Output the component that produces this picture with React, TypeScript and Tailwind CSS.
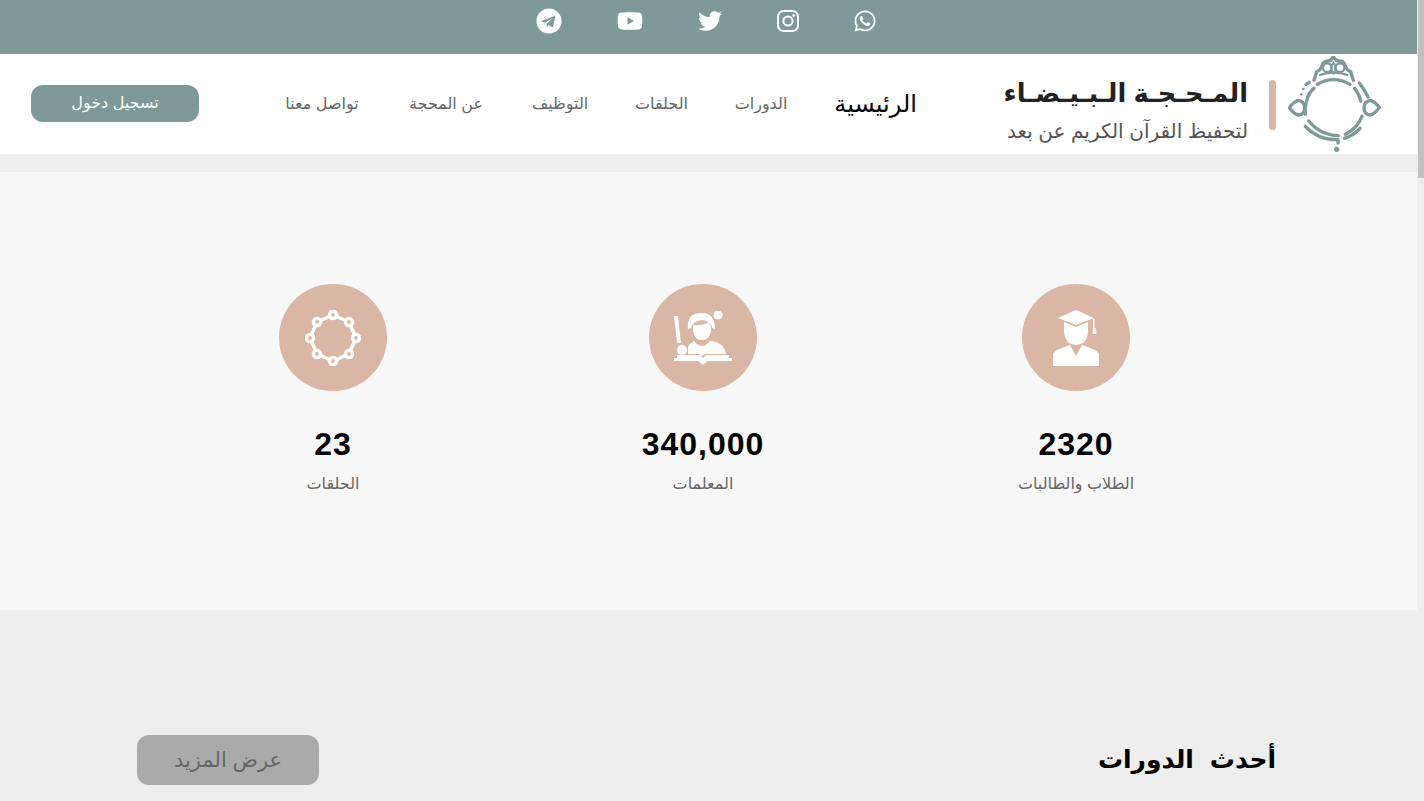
import React from "react";
import { FaWhatsapp, FaTwitter, FaYoutube, FaTelegram } from "react-icons/fa";

const NAV_ITEMS = [
  { label: "الدورات", width: "w-[52px]" },
  { label: "الحلقات", width: "w-[47px]" },
  { label: "التوظيف", width: "w-[56px]" },
  { label: "عن المحجة", width: "w-[72px]" },
  { label: "تواصل معنا", width: "w-[76px]" },
];

// viewBox is in px*3 from the logo crop, easier to trace that way
const Logo = () => (
  <svg width="93" height="97" viewBox="54 15 279 291" fill="none" stroke="#7f9999" strokeWidth="10" strokeLinecap="round" strokeLinejoin="round">
    {/* crown */}
    <path d="M132 88 L140 62 Q152 58 156 44 Q160 30 176 30 Q184 30 190 16 Q196 30 206 30 Q222 30 226 44 Q230 58 242 62 L250 88" />
    <circle cx="172" cy="50" r="13" strokeWidth="7" />
    <circle cx="210" cy="50" r="13" strokeWidth="7" />
    <path d="M190 34 Q178 52 190 68 Q202 52 190 34" strokeWidth="6" />
    <path d="M150 72 Q190 58 232 72" strokeWidth="7" />
    <path d="M142 100 Q190 72 240 100" />
    {/* ring */}
    <path d="M110 150 Q116 124 132 112" />
    <path d="M106 190 Q104 172 108 158" />
    <path d="M268 96 Q284 116 294 138" />
    <path d="M254 112 Q268 130 272 150" />
    <path d="M276 196 Q262 232 226 250" />
    <path d="M116 210 Q150 252 205 254" />
    <path d="M106 226 Q146 268 204 266 L204 276" />
    <path d="M224 262 Q252 252 270 232" />
    {/* side knots */}
    <path d="M58 170 Q72 150 86 148 Q104 152 104 170 Q104 190 86 192 Q72 190 58 170 Z" />
    <circle cx="86" cy="170" r="12" fill="white" stroke="none" />
    <path d="M328 170 Q314 150 300 148 Q282 152 282 170 Q282 190 300 192 Q314 190 328 170 Z" />
    <circle cx="300" cy="170" r="12" fill="white" stroke="none" />
    {/* dots */}
    <path d="M108 100 L118 94" />
    <circle cx="100" cy="114" r="4" fill="#7f9999" stroke="none" />
    <circle cx="94" cy="130" r="4" fill="#7f9999" stroke="none" />
    <circle cx="200" cy="295" r="8" fill="#7f9999" stroke="none" />
  </svg>
);

const InstagramIcon = () => (
  <svg width="22" height="22" viewBox="0 0 22 22" fill="none" stroke="white" strokeWidth="2" className="mt-[2px] ml-[55px]">
    <rect x="1" y="1" width="20" height="20" rx="5.5" />
    <circle cx="11" cy="11" r="4.6" />
    <circle cx="16.6" cy="5.4" r="1.3" fill="white" stroke="none" />
  </svg>
);

const GraduateIcon = () => (
  <svg width="46" height="56" viewBox="0 0 46 56" fill="white">
    <path d="M23 0 L41 8 L23 15 L5 8 Z" />
    <path d="M40 9 H41.5 V18 H43 L43.5 24 H39.5 L40 18 H40 Z" />
    <path d="M11 12 L23 17 L35 12 V20 Q35 34 23 35 Q11 34 11 20 Z" />
    <path d="M0 56 V44 Q1 40 17 35 L23 46 L29 35 Q45 40 46 44 V56 Z" />
  </svg>
);

const TeacherIcon = () => (
  <svg width="58" height="54" viewBox="0 0 58 54" fill="white">
    <path d="M0 5 H4 L7 32 H3 Z" />
    <circle cx="8" cy="39" r="5" />
    <circle cx="44" cy="4" r="4.5" />
    <path d="M14 18 Q12 2 28 2 Q41 2 41 18 L38 17 Q37 10 28 9 Q19 10 17 17 Z" />
    <path d="M19 14 Q28 15 35 11 Q37 14 37 19 Q36 29 28 29 Q20 29 19 19 Z" />
    <path d="M20 30 Q28 40 36 30 Q50 31 52 43 H31 L28 45 L25 43 H14 V36 Q16 32 20 30 Z" />
    <path d="M0 50 V47 H3 V44 H26 L29 47 L32 44 H55 V47 H58 V50 H34 L29 54 L24 50 Z" />
  </svg>
);

const RingIcon = () => (
  <svg width="56" height="56" viewBox="0 0 56 56" fill="none" stroke="white" strokeWidth="3.5">
    <path d="M28 5 L44 12 L51 28 L44 44 L28 51 L12 44 L5 28 L12 12 Z" strokeLinejoin="round" />
    {[
      [28, 5],
      [44, 12],
      [51, 28],
      [44, 44],
      [28, 51],
      [12, 44],
      [5, 28],
      [12, 12],
    ].map(([cx, cy]) => (
      <circle key={`${cx}-${cy}`} cx={cx} cy={cy} r="3.6" fill="#dab7a5" strokeWidth="3.4" />
    ))}
  </svg>
);

const Stat = ({ icon, value, label }: { icon: React.ReactNode; value: string; label: string }) => (
  <div className="flex flex-col items-center">
    <div className="flex h-[107px] w-[108px] items-center justify-center rounded-full bg-[#dab7a5]">{icon}</div>
    <div dir="ltr" className="mt-[33px] text-[32px] leading-[40px] font-bold tracking-[1px] text-black">
      {value}
    </div>
    <div className="mt-[10px] text-base leading-5 text-[#666666]">{label}</div>
  </div>
);

export default function App() {
  return (
    <div className="flex h-[801px] overflow-hidden bg-[#eeeeee] font-['Liberation_Sans','DejaVu_Sans',sans-serif]" dir="ltr">
      <div className="min-w-0 flex-1" dir="rtl">
        {/* social bar */}
        <div className="flex h-[54px] items-start bg-[#7f9999] pt-2 pl-[536px] text-white" dir="ltr">
          <FaTelegram size={26} />
          <FaYoutube size={26} className="ml-[55px]" />
          <FaTwitter size={24} className="mt-px ml-[55px]" />
          <InstagramIcon />
          <FaWhatsapp size={24} className="mt-px ml-[54px]" />
        </div>

        {/* header */}
        <header className="flex h-[100px] items-center bg-white pr-[36px] pl-[31px]">
          <Logo />
          <div className="mt-[1px] mr-[12px] h-[50px] w-[7px] rounded-sm bg-[#dab7a5]" />
          <div className="mt-[12px] mr-[21px] w-[260px]">
            <div className="text-[25.7px] leading-[32px] font-bold text-[#222222]">المـحـجـة الـبـيـضـاء</div>
            <div className="mt-[10px] text-[20px] leading-[24px] text-[#555555]">لتحفيظ القرآن الكريم عن بعد</div>
          </div>
          <nav className="mr-[71px] flex items-center gap-[50px]">
            <a className="w-[80px] text-2xl whitespace-nowrap text-black">الرئيسية</a>
            {NAV_ITEMS.map((item) => (
              <a key={item.label} className={`flex justify-center text-base whitespace-nowrap text-[#666666] ${item.width}`}>
                {item.label}
              </a>
            ))}
          </nav>
          <button className="mr-auto mb-[2px] h-[37px] w-[168px] rounded-xl bg-[#7f9999] text-base text-white">تسجيل دخول</button>
        </header>

        {/* stats */}
        <section className="mt-[18px] grid h-[438px] grid-cols-[370px_370px_376px] bg-[#f8f8f8] pt-[112px] pr-[153px] pl-[148px]" dir="ltr">
          <Stat icon={<RingIcon />} value="23" label="الحلقات" />
          <Stat icon={<TeacherIcon />} value="340,000" label="المعلمات" />
          <Stat icon={<GraduateIcon />} value="2320" label="الطلاب والطالبات" />
        </section>

        {/* latest courses */}
        <section className="flex items-center justify-between pt-[125px] pr-[141px] pl-[137px]">
          <h2 className="text-[25px] font-bold [word-spacing:9px] text-black">أحدث الدورات</h2>
          <button className="h-[50px] w-[182px] rounded-xl bg-[#aaaaaa] text-[21px] text-[#666666]">عرض المزيد</button>
        </section>
      </div>

      {/* scrollbar */}
      <div className="w-[7px] shrink-0 bg-[#eeeeee]">
        <div className="ml-px h-[178px] bg-[#c1c1c1]" />
      </div>
    </div>
  );
}
